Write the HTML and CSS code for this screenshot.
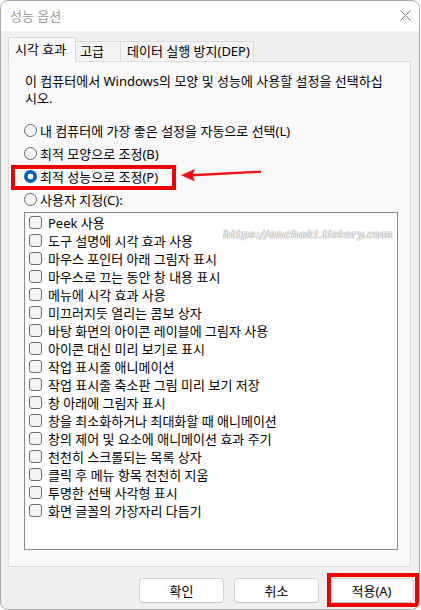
FILE: index.html
```
<!DOCTYPE html>
<html lang="ko">
<head>
<meta charset="utf-8">
<title>성능 옵션</title>
<link rel="stylesheet" href="styles.css">
</head>
<body>
<div class="window">
  <div class="titlebar">
    <span class="title">성능 옵션</span>
    <svg class="close" width="11" height="11" viewBox="0 0 11 11"><path d="M0.5 0.5L10.5 10.5M10.5 0.5L0.5 10.5" stroke="#7a7a7a" stroke-width="1" fill="none"/></svg>
  </div>
  <div class="main">
    <div class="tabs">
      <div class="tab active">시각 효과</div>
      <div class="tab t2">고급</div>
      <div class="tab t3">데이터 실행 방지(DEP)</div>
    </div>
    <div class="panel">
      <p class="desc">이 컴퓨터에서 Windows의 모양 및 성능에 사용할 설정을 선택하십<br>시오.</p>
      <div class="radios">
        <div class="radio-row"><span class="radio"></span><span>내 컴퓨터에 가장 좋은 설정을 자동으로 선택(L)</span></div>
        <div class="radio-row"><span class="radio"></span><span>최적 모양으로 조정(B)</span></div>
        <div class="radio-row"><span class="radio checked"></span><span>최적 성능으로 조정(P)</span></div>
        <div class="radio-row"><span class="radio"></span><span>사용자 지정(C):</span></div>
      </div>
      <div class="list">
        <div class="item"><span class="check"></span><span>Peek 사용</span></div>
        <div class="item"><span class="check"></span><span>도구 설명에 시각 효과 사용</span></div>
        <div class="item"><span class="check"></span><span>마우스 포인터 아래 그림자 표시</span></div>
        <div class="item"><span class="check"></span><span>마우스로 끄는 동안 창 내용 표시</span></div>
        <div class="item"><span class="check"></span><span>메뉴에 시각 효과 사용</span></div>
        <div class="item"><span class="check"></span><span>미끄러지듯 열리는 콤보 상자</span></div>
        <div class="item"><span class="check"></span><span>바탕 화면의 아이콘 레이블에 그림자 사용</span></div>
        <div class="item"><span class="check"></span><span>아이콘 대신 미리 보기로 표시</span></div>
        <div class="item"><span class="check"></span><span>작업 표시줄 애니메이션</span></div>
        <div class="item"><span class="check"></span><span>작업 표시줄 축소판 그림 미리 보기 저장</span></div>
        <div class="item"><span class="check"></span><span>창 아래에 그림자 표시</span></div>
        <div class="item"><span class="check"></span><span>창을 최소화하거나 최대화할 때 애니메이션</span></div>
        <div class="item"><span class="check"></span><span>창의 제어 및 요소에 애니메이션 효과 주기</span></div>
        <div class="item"><span class="check"></span><span>천천히 스크롤되는 목록 상자</span></div>
        <div class="item"><span class="check"></span><span>클릭 후 메뉴 항목 천천히 지움</span></div>
        <div class="item"><span class="check"></span><span>투명한 선택 사각형 표시</span></div>
        <div class="item"><span class="check"></span><span>화면 글꼴의 가장자리 다듬기</span></div>
      </div>
    </div>
    <div class="buttons">
      <button class="btn">확인</button>
      <button class="btn">취소</button>
      <button class="btn">적용(A)</button>
    </div>
  </div>
  <div class="watermark">https://anchoki.tistory.com</div>
  <div class="mark mark-radio"></div>
  <div class="mark mark-apply"></div>
  <svg class="arrow" width="86" height="20" viewBox="0 0 86 20">
    <polygon points="14,8.9 83,5.6 83,7.8 14,11.6" fill="#f01010"/>
    <polygon points="3,10.3 17,4 14.5,10.3 17,16.6" fill="#f01010"/>
  </svg>
</div>
</body>
</html>
```
FILE: styles.css
```
* { box-sizing: border-box; }
body {
  margin: 0;
  background: #ffffff;
  font-family: "Noto Sans", "Noto Sans CJK KR", sans-serif;
  font-size: 13px;
  color: #000;
}
.window {
  position: relative;
  width: 420px;
  height: 610px;
  border: 1px solid #a9a9a9;
  border-radius: 8px;
  background: #f0f0f0;
  overflow: hidden;
  display: flex;
  flex-direction: column;
}
.titlebar {
  height: 30px;
  background: #ffffff;
  display: flex;
  align-items: center;
  justify-content: space-between;
  padding: 0 8px 1px 9px;
  flex-shrink: 0;
}
.title { color: #9c9c9c; font-size: 13px; }
.close { display: block; }
.main {
  padding: 6px 5px 0 7px;
  display: flex;
  flex-direction: column;
}
.tabs {
  display: flex;
  align-items: flex-end;
  height: 24px;
}
.tab {
  height: 20px;
  border: 1px solid #d9d9d9;
  border-bottom: none;
  background: #f3f3f3;
  display: flex;
  align-items: center;
  line-height: 1;
  white-space: nowrap;
}
.tab.active {
  height: 25px;
  margin-bottom: -1px;
  width: 68px;
  padding-left: 6px;
  padding-bottom: 2px;
  background: #f9f9f9;
  position: relative;
  z-index: 1;
}
.tab.t2 { width: 45px; border-left: none; padding-left: 4px; }
.tab.t3 { width: 133px; border-left: none; padding-left: 6px; }
.panel {
  width: 403px;
  height: 506px;
  border: 1px solid #dcdcdc;
  background: #f9f9f9;
  padding-top: 11px;
}
.desc {
  margin: 0;
  padding-left: 16px;
  line-height: 17px;
  white-space: nowrap;
}
.radios { margin-top: 12px; }
.radio-row {
  height: 23px;
  display: flex;
  align-items: center;
  gap: 3px;
  padding-left: 15px;
}
.radio {
  width: 13px;
  height: 13px;
  border-radius: 50%;
  border: 1px solid #666;
  background: #f4f4f4;
  flex-shrink: 0;
}
.radio.checked {
  border: none;
  background: radial-gradient(circle, #ffffff 0 2.6px, #005fb8 3.2px);
}
.list {
  margin: 1px 0 0 15px;
  width: 374px;
  height: 338px;
  border: 1px solid #868a91;
  background: #ffffff;
}
.item {
  height: 18px;
  display: flex;
  align-items: center;
  gap: 6px;
  padding-left: 4px;
}
.check {
  width: 13px;
  height: 13px;
  border: 1px solid #6e6e6e;
  border-radius: 3px;
  background: #f4f4f4;
  flex-shrink: 0;
}
.buttons {
  margin-top: 11px;
  display: flex;
  justify-content: flex-end;
  gap: 10px;
}
.btn {
  width: 85px;
  height: 25px;
  border: 1px solid #d3d3d3;
  border-bottom-color: #c4c4c4;
  border-radius: 4px;
  background: #fdfdfd;
  font: inherit;
  color: #000;
  padding: 0;
}
.mark {
  position: absolute;
  border: 4px solid #f20000;
}
.mark-radio { left: 10px; top: 164px; width: 165px; height: 25px; }
.mark-apply { left: 326px; top: 572px; width: 92px; height: 34px; }
.arrow { position: absolute; left: 177px; top: 164px; }
.watermark {
  position: absolute;
  left: 222px;
  top: 226px;
  font-family: "DejaVu Serif", serif;
  font-style: italic;
  font-size: 11.5px;
  letter-spacing: 0.55px;
  color: #ffffff;
  text-shadow: 0 0 1px #8a8a8a, 0 0 1px #8a8a8a, 0 0 2px #b0b0b0;
}
```
